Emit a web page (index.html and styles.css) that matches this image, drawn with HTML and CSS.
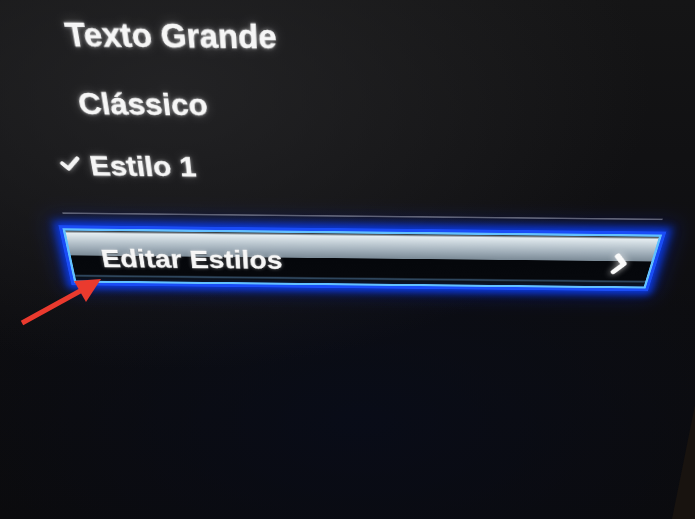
FILE: index.html
```html
<!DOCTYPE html>
<html lang="pt">
<head>
    <meta charset="UTF-8">
    <meta name="viewport" content="width=device-width, initial-scale=1.0">
    <title>Legendas</title>
    <link rel="stylesheet" href="styles.css">
</head>
<body>
    <div class="screen">
        <div class="menu">
            <div class="menu-item"><span class="check"></span>Texto Grande</div>
            <div class="menu-item"><span class="check"></span>Clássico</div>
            <div class="menu-item selected">
                <span class="check">
                    <svg viewBox="0 0 24 18" width="24" height="18">
                        <polyline points="3,9 9,15 21,3" fill="none" stroke="#f4f4f4" stroke-width="5" stroke-linecap="round" stroke-linejoin="round"/>
                    </svg>
                </span>Estilo 1
            </div>

            <div class="separator"></div>

            <div class="menu-button">
                <span class="label">Editar Estilos</span>
                <svg class="chevron" viewBox="0 0 22 32" width="22" height="32">
                    <polyline points="6,5 16,16 6,27" fill="none" stroke="#fafafa" stroke-width="7" stroke-linecap="round" stroke-linejoin="round"/>
                </svg>
            </div>
        </div>

        <!-- annotation arrow -->
        <svg class="pointer" viewBox="0 0 90 52" width="90" height="52">
            <line x1="4" y1="47" x2="64" y2="14" stroke="#ea3a2e" stroke-width="5"/>
            <polygon points="83,3 56,5 68,26" fill="#ea3a2e"/>
        </svg>
    </div>
</body>
</html>
```

FILE: styles.css
```css
* {
    margin: 0;
    padding: 0;
    box-sizing: border-box;
}

body {
    width: 695px;
    height: 519px;
    overflow: hidden;
    font-family: "Liberation Sans", Arial, sans-serif;
    background: #0c0d10;
}

.screen {
    position: relative;
    width: 695px;
    height: 519px;
    overflow: hidden;
    background:
        radial-gradient(ellipse 480px 280px at 170px 90px, rgba(40,40,42,0.75), transparent),
        radial-gradient(ellipse 420px 220px at 360px 420px, rgba(8,12,26,0.8), transparent),
        linear-gradient(#151516, #0d0d10 60%, #0b0b0d);
}

/* edge of the bezel, bottom right */
.screen::after {
    content: "";
    position: absolute;
    inset: 0;
    background: #18130f;
    clip-path: polygon(695px 405px, 695px 519px, 672px 519px);
}

/* the whole list sits on a tilted plane */
.menu {
    width: 721px;
    margin-left: 12px;
    transform-origin: 314px 0;
    transform: rotate(0.6deg) perspective(500px) rotateX(-20deg) scaleY(1.15);
}

.menu-item {
    display: flex;
    align-items: center;
    height: 71px;
    line-height: 71px;
    padding-left: 13px;
    font-size: 34px;
    font-weight: bold;
    color: #f6f6f6;
    -webkit-text-stroke: 0.4px #fff;
    text-shadow: 0 0 4px rgba(255,255,255,0.55), 0 0 12px rgba(255,255,255,0.22);
}

.check {
    display: flex;
    align-items: center;
    width: 34px;
    height: 71px;
    padding-bottom: 5px;
}

.check svg {
    filter: drop-shadow(0 0 3px rgba(255,255,255,0.5));
}

.separator {
    height: 2px;
    margin: 23px 5px 0 4px;
    background: #6b6b6b;
}

.menu-button {
    display: flex;
    align-items: center;
    justify-content: space-between;
    height: 76px;
    margin-top: 19px;
    padding: 6px 27px 0 37px;
    border: 3px solid #62c0ff;
    background: linear-gradient(to bottom,
        #1c242c 0%, #e4ecf0 5%, #c8d3da 16%, #9fadb8 33%, #7c8b97 48%,
        #05070b 49%, #06080c 87%, #3a5874 90%, #0a1018 93%, #0a1430 100%);
    box-shadow:
        0 0 0 4px #1a4cf6,
        0 0 10px 9px #0b38dc,
        0 0 26px 12px rgba(10,40,200,0.4);
}

.label {
    line-height: 64px;
    font-size: 35px;
    font-weight: bold;
    color: #f6f6f6;
    -webkit-text-stroke: 0.3px #fff;
    text-shadow: 0 0 5px rgba(255,255,255,0.45), 0 1px 2px rgba(0,0,0,0.6);
}

.chevron {
    filter: drop-shadow(0 0 5px rgba(255,255,255,0.75));
}

.pointer {
    position: absolute;
    left: 18px;
    top: 276px;
}
```
